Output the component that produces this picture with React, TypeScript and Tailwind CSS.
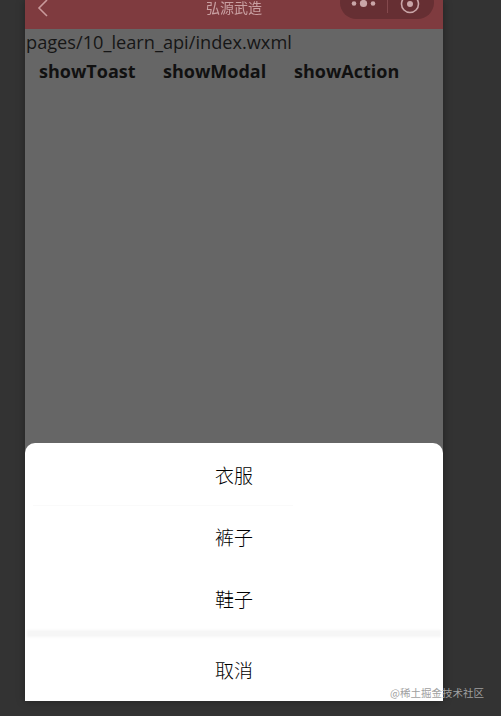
const cjk = "font-['Noto_Sans_CJK_SC','Noto_Sans',sans-serif]";

function ActionItem({ label, className }: { label: string; className: string }) {
  return (
    <div className={`h-[62px] flex items-center justify-center text-[19px] font-light text-black ${cjk} ${className}`}>
      {label}
    </div>
  );
}

export default function App() {
  return (
    <div className="relative w-[501px] h-[716px] overflow-hidden bg-[#333333] font-['Open_Sans',sans-serif]">
      <div className="mx-[25px] w-[418px] h-[701px] flex flex-col bg-[#666666] shadow-[0_0_8px_rgba(0,0,0,0.35)]">
        {/* nav bar */}
        <div className="relative h-[29px] shrink-0 bg-[#7f3b3f] flex items-center justify-center">
          <svg className="absolute left-[11px] top-[-2px]" width="14" height="22" viewBox="0 0 14 22" fill="none">
            <path d="M11 2 L3 10 L11 18" stroke="#c99a9c" strokeWidth="1.6" />
          </svg>
          <span className={`-mt-[15px] text-[14px] leading-[14px] text-[#c9a0a2] blur-[0.6px] ${cjk}`}>弘源武造</span>
          <div className="absolute right-[9px] top-[-14px] w-[94px] h-[33px] rounded-full bg-[#662f33] flex items-center">
            <svg className="ml-[11px] mt-[2px]" width="26" height="10" viewBox="0 0 26 10">
              <circle cx="3" cy="4.5" r="2.3" fill="#c9a6a8" />
              <circle cx="12.5" cy="4.5" r="3.6" fill="#c9a6a8" />
              <circle cx="22" cy="4.5" r="2.3" fill="#c9a6a8" />
            </svg>
            <div className="ml-[10px] w-px h-[20px] bg-[#84494d]" />
            <svg className="ml-[11px] mt-[2px]" width="22" height="22" viewBox="0 0 22 22" fill="none">
              <circle cx="11" cy="11" r="8.5" stroke="#c9a6a8" strokeWidth="1.6" />
              <circle cx="11" cy="11" r="3" fill="#c9a6a8" />
            </svg>
          </div>
        </div>

        {/* page content */}
        <div className="flex-1 min-h-0">
          <div className="h-[26px] pl-px text-[18.2px] leading-[27px] text-[#161616]">
            pages/10_learn_api/index.wxml
          </div>
          <div className="mt-[3px] flex pl-[14px] text-[18px] leading-[26px] font-bold text-[#111]">
            <span className="w-[124px]">showToast</span>
            <span className="w-[131px]">showModal</span>
            <span>showAction</span>
          </div>
        </div>

        {/* action sheet */}
        <div className="h-[258px] shrink-0 rounded-t-[10px] bg-white flex flex-col">
          <ActionItem label="衣服" className="pt-[2px]" />
          <div className="ml-[8px] mr-[150px] h-px bg-[#fafafa]" />
          <ActionItem label="裤子" className="pt-0" />
          <ActionItem label="鞋子" className="pt-[1px]" />
          <div className="h-[7px] bg-[#f6f6f6] mx-[2px] blur-[1px]" />
          <div className={`flex-1 pt-[2px] flex items-center justify-center text-[19px] font-light text-black ${cjk}`}>取消</div>
        </div>
      </div>

      {/* watermark */}
      <span className={`absolute left-[390px] top-[686px] text-[10.5px] leading-[14px] text-[#a0a0a0] ${cjk}`}>
        @稀土掘金技术社区
      </span>
    </div>
  );
}
